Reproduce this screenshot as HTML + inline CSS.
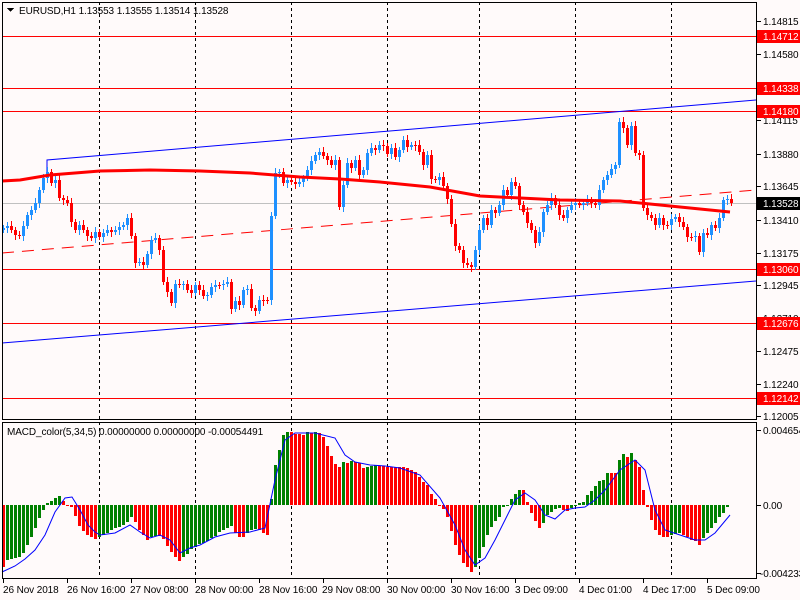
<!DOCTYPE html>
<html><head><meta charset="utf-8">
<style>
html,body{margin:0;padding:0;background:#fffafa;width:800px;height:600px;overflow:hidden}
svg{display:block}
text{font-family:"Liberation Sans",sans-serif;font-size:10px;fill:#000;letter-spacing:-0.1px}
</style></head><body>
<svg id="s" width="800" height="600" viewBox="0 0 800 600" xmlns="http://www.w3.org/2000/svg" shape-rendering="crispEdges">
<rect width="800" height="600" fill="#fffafa"/>
<g stroke="#000" stroke-dasharray="3,3" stroke-width="1">
<path d="M99.5 2V419M195.5 2V419M291.5 2V419M387.5 2V419M479.5 2V419M575.5 2V419M671.5 2V419"/>
<path d="M99.5 422V578M195.5 422V578M291.5 422V578M387.5 422V578M479.5 422V578M575.5 422V578M671.5 422V578"/>
</g>
<g stroke="#ff0000" stroke-width="1">
<path d="M2 36.5H757M2 88.5H757M2 111.5H757M2 269.5H757M2 323.5H757M2 398.5H757"/>
</g>
<path d="M2 203.5H757" stroke="#c0c0c0"/>
<g fill="none" stroke="#0000ff" stroke-width="1" shape-rendering="auto">
<path d="M47 175L47 160L756 100"/>
<path d="M2 343L756 281"/>
</g>
<path d="M2 253L756 190" stroke="#ff0000" stroke-dasharray="12,8" fill="none" shape-rendering="auto"/>
<g id="candles"></g>
<polyline fill="none" stroke="#ff0000" stroke-width="3" shape-rendering="auto" points="2,181 20,180 50,175 100,171 150,170 200,171 250,173 300,177 340,179 380,182 430,187 480,196 560,200 620,201 660,205 700,209 730,212"/>
<g id="hist"></g>
<polyline fill="none" stroke="#0000ff" stroke-width="1" shape-rendering="auto" points="2,572 15,566 25,559 35,550 45,535 55,512 65,498 72,497 80,510 88,525 95,532 100,535 115,533 130,525 140,532 150,538 160,535 170,540 180,553 190,548 200,545 215,537 230,533 250,532 265,528 275,480 285,440 295,433 315,433 335,438 345,455 355,462 370,465 385,466 400,468 420,475 440,498 455,525 465,550 475,565 485,558 495,540 505,520 515,500 525,493 535,500 545,515 555,519 565,510 575,508 585,507 595,500 605,490 620,470 635,460 645,470 655,510 665,530 680,535 695,540 705,540 715,533 730,515"/>
<g fill="none" stroke="#000" stroke-width="1">
<rect x="2.5" y="2.5" width="754" height="417"/>
<rect x="2.5" y="422.5" width="754" height="156"/>
</g>
<g stroke="#000"><path d="M757 21.5h4M757 54.5h4M757 120.5h4M757 154.5h4M757 186.5h4M757 220.5h4M757 253.5h4M757 285.5h4M757 318.5h4M757 351.5h4M757 384.5h4M757 416.5h4M757 430.5h4M757 505.5h4M757 573.5h4"/></g>
<g>
<text x="763" y="25">1.14815</text>
<text x="763" y="58">1.14580</text>
<text x="763" y="124">1.14115</text>
<text x="763" y="158">1.13880</text>
<text x="763" y="190">1.13645</text>
<text x="763" y="224">1.13410</text>
<text x="763" y="257">1.13175</text>
<text x="763" y="289">1.12945</text>
<text x="763" y="322">1.12710</text>
<text x="763" y="355">1.12475</text>
<text x="763" y="388">1.12240</text>
<text x="763" y="420">1.12005</text>
<text x="763" y="434">0.004654</text>
<text x="763" y="509">0.00</text>
<text x="760" y="577">-0.004233</text>
</g>
<g>
<rect x="757" y="30" width="43" height="13" fill="#ff0000"/>
<rect x="757" y="82" width="43" height="13" fill="#ff0000"/>
<rect x="757" y="105" width="43" height="13" fill="#ff0000"/>
<rect x="757" y="197" width="43" height="13" fill="#000"/>
<rect x="757" y="263" width="43" height="13" fill="#ff0000"/>
<rect x="757" y="317" width="43" height="13" fill="#ff0000"/>
<rect x="757" y="392" width="43" height="13" fill="#ff0000"/>
<text x="763" y="40" style="fill:#fff">1.14712</text>
<text x="763" y="92" style="fill:#fff">1.14338</text>
<text x="763" y="115" style="fill:#fff">1.14180</text>
<text x="763" y="207" style="fill:#fff">1.13528</text>
<text x="763" y="273" style="fill:#fff">1.13060</text>
<text x="763" y="327" style="fill:#fff">1.12676</text>
<text x="763" y="402" style="fill:#fff">1.12142</text>
</g>
<g stroke="#000"><path d="M3.5 579v4M67.5 579v4M131.5 579v4M195.5 579v4M259.5 579v4M323.5 579v4M387.5 579v4M451.5 579v4M515.5 579v4M579.5 579v4M643.5 579v4M707.5 579v4"/></g>
<g>
<text x="3" y="593">26 Nov 2018</text>
<text x="67" y="593">26 Nov 16:00</text>
<text x="130" y="593">27 Nov 08:00</text>
<text x="195" y="593">28 Nov 00:00</text>
<text x="259" y="593">28 Nov 16:00</text>
<text x="322" y="593">29 Nov 08:00</text>
<text x="387" y="593">30 Nov 00:00</text>
<text x="451" y="593">30 Nov 16:00</text>
<text x="515" y="593">3 Dec 09:00</text>
<text x="579" y="593">4 Dec 01:00</text>
<text x="643" y="593">4 Dec 17:00</text>
<text x="707" y="593">5 Dec 09:00</text>
</g>
<path d="M7 8h7l-3.5 4z" fill="#000"/>
<text x="19" y="14">EURUSD,H1  1.13553 1.13555 1.13514 1.13528</text>
<text x="7" y="435">MACD_color(5,34,5) 0.00000000 0.00000000 -0.00054491</text>
</svg>
<script>
(function(){
var C=[228,226,230,235,236,226,215,210,203,190,178,172,183,180,198,200,203,222,230,225,230,236,238,232,237,233,230,232,230,227,225,218,236,263,262,265,254,240,238,250,282,292,303,284,285,284,290,293,285,290,296,295,287,285,285,284,282,309,301,305,290,289,308,311,300,300,300,216,173,172,183,180,182,184,182,178,170,161,155,152,156,160,165,160,207,185,163,168,160,175,170,153,148,150,145,146,154,148,157,150,140,147,145,145,152,165,155,179,180,177,186,199,224,246,250,263,265,267,250,230,218,225,210,213,205,190,195,182,186,205,212,223,230,243,232,212,205,198,205,215,218,210,205,203,205,203,200,203,205,190,180,175,169,165,122,128,145,126,153,155,208,215,218,225,218,225,225,219,217,222,227,237,237,236,252,233,235,225,228,218,200,199,203];
var g=document.getElementById('candles'),h='',prev=230;
for(var i=0;i<C.length;i++){var x=3+4*i,c=C[i],o=prev,t1=Math.min(o,c),b1=Math.max(o,c);if(b1-t1<1)b1=t1+1;
var col=c<o?'#1e90ff':'#ff0000';
h+='<line x1="'+(x+0.5)+'" x2="'+(x+0.5)+'" y1="'+(t1-3-(i%3))+'" y2="'+(b1+3+(i%2)*2)+'" stroke="'+col+'"/>';
h+='<rect x="'+(x-1)+'" y="'+t1+'" width="3" height="'+(b1-t1)+'" fill="'+col+'"/>';prev=c;}
g.innerHTML=h;
var H=[567,560,559,558,557,553,545,537,528,518,510,503,501,498,496,501,505,507,516,526,531,535,537,539,537,535,533,530,528,527,525,522,517,522,530,535,540,537,536,536,539,546,552,557,561,557,554,549,547,544,543,541,538,536,532,530,528,526,533,537,537,533,530,529,530,533,535,499,465,450,435,432,432,434,434,435,432,433,432,433,437,446,456,464,467,462,463,461,462,463,468,467,466,465,466,466,467,467,467,467,467,468,470,472,477,482,485,494,499,505,509,517,531,545,555,563,567,572,567,558,547,535,527,521,517,507,505,499,494,490,490,502,513,521,528,523,515,512,509,508,510,511,508,506,503,502,495,491,486,481,480,473,473,473,460,454,457,453,460,467,490,507,520,530,535,537,537,535,534,533,535,537,540,541,545,538,533,528,523,517,513,507];
var gh=document.getElementById('hist'),s='',pv=505;
for(var j=0;j<H.length;j++){var v=H[j],xx=3+4*j;
var up=(505-v)>(505-pv);var col2=up?'#008000':'#ff0000';
var t2=Math.min(v,505),b2=Math.max(v,505);if(b2-t2<1)b2=t2+1;
s+='<rect x="'+(xx-1)+'" y="'+t2+'" width="3" height="'+(b2-t2)+'" fill="'+col2+'"/>';pv=v;}
gh.innerHTML=s;
})();
</script>
</body></html>
